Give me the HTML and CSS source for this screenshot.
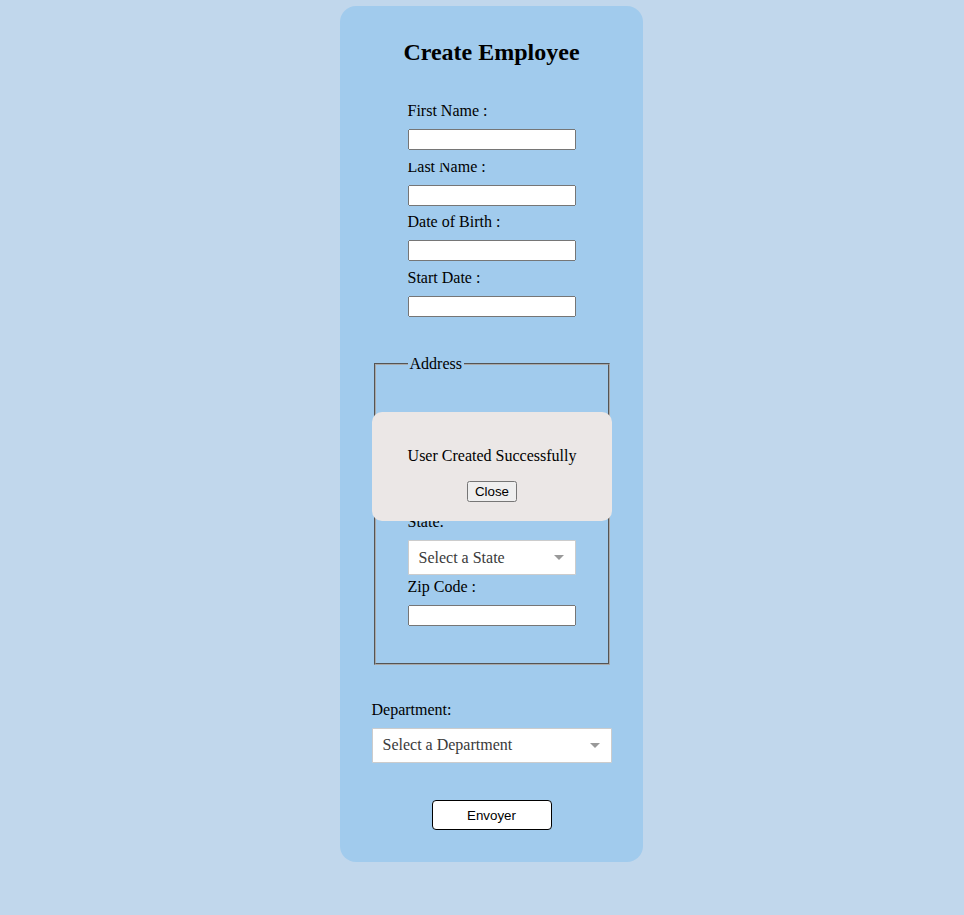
FILE: index.html
```html
<!DOCTYPE html>
<html lang="en">
<head>
<meta charset="utf-8">
<title>Create Employee</title>
<link rel="stylesheet" href="styles.css">
</head>
<body>
<main class="card">
  <h2 class="title">Create Employee</h2>
  <form class="form">
    <div class="group">
      <label class="label" for="first">First Name :</label>
      <input class="input" id="first" type="text">
      <label class="label label--clipped" for="last">Last Name :</label>
      <input class="input" id="last" type="text">
      <label class="label" for="dob">Date of Birth :</label>
      <input class="input" id="dob" type="text">
      <label class="label" for="start">Start Date :</label>
      <input class="input" id="start" type="text">
    </div>

    <fieldset class="address">
      <legend class="legend">Address</legend>
      <div class="group">
        <label class="label" for="street">Street :</label>
        <input class="input input--tight" id="street" type="text">
        <label class="label" for="city">City :</label>
        <input class="input input--tight" id="city" type="text">
        <label class="label">State:</label>
        <div class="select select--state">
          <span class="select-text">Select a State</span>
          <svg class="select-arrow" width="10" height="5" viewBox="0 0 10 5"><path d="M0 0H10L5 5Z"/></svg>
        </div>
        <label class="label" for="zip">Zip Code :</label>
        <input class="input" id="zip" type="text">
      </div>
    </fieldset>

    <div class="dept">
      <label class="label">Department:</label>
      <div class="select">
        <span class="select-text">Select a Department</span>
        <svg class="select-arrow" width="10" height="5" viewBox="0 0 10 5"><path d="M0 0H10L5 5Z"/></svg>
      </div>
    </div>

    <button class="submit" type="button">Envoyer</button>
  </form>

  <div class="modal">
    <p class="modal-text">User Created Successfully</p>
    <button class="modal-close" type="button">Close</button>
  </div>
</main>
</body>
</html>
```

FILE: styles.css
```css
html, body {
  margin: 0;
  padding: 0;
}

body {
  padding-left: 19px;
  background: #c1d7ec;
  font-family: "Liberation Serif", "Times New Roman", serif;
  font-size: 16px;
  color: #000;
}

.card {
  position: relative;
  box-sizing: border-box;
  width: 303px;
  margin: 6px auto 0;
  padding: 33px 31.5px 32px;
  background: #a1cbed;
  border-radius: 16px;
}

.title {
  margin: 0 0 36px;
  font-size: 24px;
  font-weight: bold;
  text-align: center;
}

.form {
  display: flex;
  flex-direction: column;
  align-items: center;
}

.group {
  display: flex;
  flex-direction: column;
  width: 168px;
}

.label {
  display: block;
  margin-bottom: 9px;
}

.label--clipped {
  clip-path: inset(5.5px 0 0 0);
}

.input {
  box-sizing: border-box;
  width: 168px;
  height: 21px;
  margin: 0 0 7.5px;
}

.input--tight {
  margin-bottom: 1.5px;
}

.address {
  margin: 31px 0 0;
  padding: 41px 32px 29px;
  border: 2px groove #a8a8a8;
}

.legend {
  padding: 0 2px;
}

.select {
  box-sizing: border-box;
  display: flex;
  align-items: center;
  justify-content: space-between;
  height: 35px;
  padding: 0 11px 0 10px;
  background: #fff;
  border: 1px solid #cccccc;
  border-radius: 1px;
  color: #3a3a3a;
}

.select--state {
  margin-bottom: 3px;
}

.select-arrow {
  display: block;
  fill: #999;
}

.dept {
  display: flex;
  flex-direction: column;
  width: 240px;
  margin-top: 36px;
}

.submit {
  box-sizing: border-box;
  width: 120px;
  height: 30px;
  margin-top: 37.5px;
  background: #fff;
  border: 1px solid #000;
  border-radius: 4px;
  font-family: "Liberation Sans", Arial, sans-serif;
  font-size: 13.33px;
  color: #000;
}

.modal {
  position: absolute;
  top: 406px;
  left: 32px;
  box-sizing: border-box;
  width: 240px;
  padding: 19px;
  background: #ebe7e6;
  border-radius: 10px;
  text-align: center;
}

.modal-text {
  margin: 16px 0;
}

.modal-close {
  font-family: "Liberation Sans", Arial, sans-serif;
  font-size: 13.33px;
}
```
